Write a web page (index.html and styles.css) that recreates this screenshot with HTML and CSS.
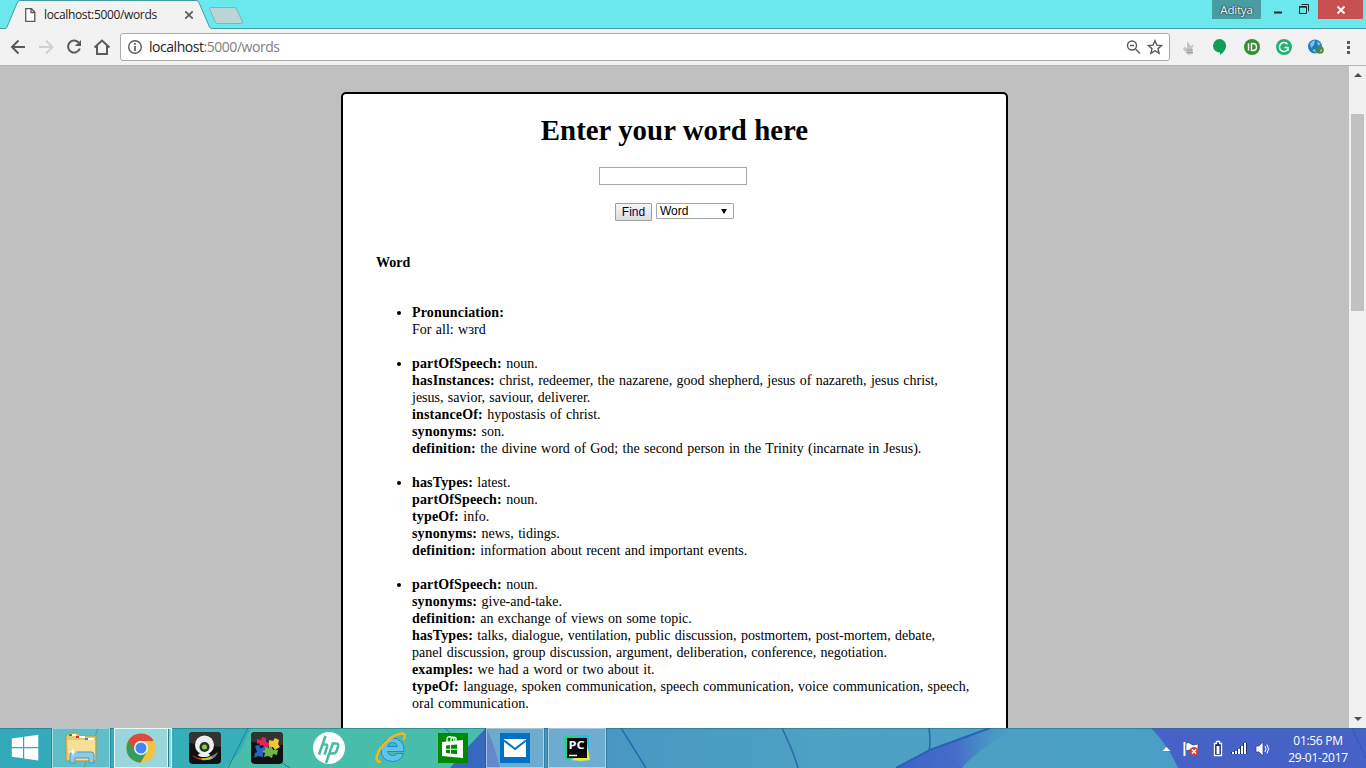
FILE: index.html
```html
<!DOCTYPE html>
<html lang="en">
<head>
<meta charset="utf-8">
<title>localhost:5000/words</title>
<link rel="stylesheet" href="styles.css">
</head>
<body>
<div class="desktop">
<header class="titlebar">
  <svg class="tabs" width="250" height="29" viewBox="0 0 250 29">
    <path d="M0 28.5H5Q6.500 28.500 7 27L17.500 2Q18.200 .5 20 .5H196Q198 .5 198.700 2L209.500 27Q210.200 28.500 212 28.500H250V29H0Z" fill="#f2f2f2"/>
    <path d="M0 28.500H5Q6.500 28.500 7 27L17.500 2Q18.200 .5 20 .5H196Q198 .5 198.700 2L209.500 27Q210.200 28.500 212 28.500H250" fill="none" stroke="#459da1"/>
    <path d="M210.500 7.500H234Q236 7.500 236.700 9L242.500 22Q243 23.500 241.500 23.500H218Q216 23.500 215.300 22L209.500 9Q209 7.500 210.500 7.500Z" fill="#b9d5d6" stroke="#7cb4b7"/>
    <path d="M25.700 8.700H31.500L34.800 12V21.300H25.700ZM31 9V12.500H34.500" fill="#fff" stroke="#5a5a5a" stroke-width="1.300"/>
    <path d="M185.300 11.300L192.700 18.700M192.700 11.300L185.300 18.700" stroke="#5a5a5a" stroke-width="1.700"/>
  </svg>
  <span class="tab-title">localhost:5000/words</span>
  <span class="user">Aditya</span>
  <svg class="winbtns" width="62" height="19" viewBox="0 0 62 19"><path d="M0 12.500h8" stroke="#162c2e" stroke-width="2"/><path d="M25.500 6.500h7v7h-7zM25 7.200h8M27.500 4.500h7v7" fill="none" stroke="#162c2e"/></svg>
  <span class="close"><svg width="10" height="10" viewBox="0 0 10 10"><path d="M1.500 1.500l7 7M8.500 1.500l-7 7" stroke="#fff" stroke-width="1.800"/></svg></span>
</header>
<div class="toolbar">
  <svg class="nav" width="112" height="37" viewBox="0 0 112 37">
    <g fill="none" stroke="#5a5a5a" stroke-width="2">
      <path d="M25 19H12.500M18.500 12.500L12 19L18.500 25.500"/>
      <path d="M39 19H52M46 12.500L52.500 19L46 25.500" stroke="#d0d0d0"/>
      <path d="M78.500 14.500A6 6 0 1 0 79.800 20.500"/><path d="M81 12V18H75Z" fill="#5a5a5a" stroke="none"/>
      <path d="M94.500 19.500L102 12.500L109.500 19.500M97 18V26H107V18"/>
    </g>
  </svg>
  <div class="omnibox">
    <svg width="16" height="16" viewBox="0 0 16 16"><circle cx="8" cy="8" r="6.300" fill="none" stroke="#5a5a5a" stroke-width="1.400"/><path d="M8 4v1.700M8 7v5" stroke="#5a5a5a" stroke-width="1.700"/></svg>
    <span class="url">localhost<i>:5000/words</i></span>
    <svg width="38" height="16" viewBox="0 0 38 16"><g fill="none" stroke="#5a5a5a" stroke-width="1.400"><circle cx="6" cy="6.500" r="4.500"/><path d="M4 6.500h4M9.500 10L14 14.500"/><path d="M29 1.700L30.900 6.100L35.600 6.500L32 9.600L33.100 14.200L29 11.700L24.900 14.200L26 9.600L22.400 6.500L27.100 6.100Z"/></g></svg>
  </div>
  <svg class="exts" width="196" height="37" viewBox="1170 28 196 37">
    <path d="M1184 47L1187 48L1187 41L1191 46L1194 44L1192 49L1193 54L1188 55L1183 49Z" fill="#c6c6c6"/><path d="M1187 50h6M1187 52.500h6" stroke="#999"/>
    <path d="M1219.500 39a6.600 6.600 0 0 1 6.600 6.600C1226 50 1223 53 1220 55V52.500A6.600 6.600 0 0 1 1219.500 39" fill="#109d58"/>
    <circle cx="1252" cy="47" r="8" fill="#358e35"/><path d="M1248.500 43.500v7M1251.500 43.500v7h1.500q3.500 0 3.500-3.500t-3.500-3.500z" fill="none" stroke="#fff" stroke-width="1.500"/>
    <circle cx="1284" cy="47" r="8" fill="#20b373"/><path d="M1287.500 44.200A4.500 4.500 0 1 0 1288 49V47.500H1284.500M1288 47v4" fill="none" stroke="#fff" stroke-width="1.500"/>
    <circle cx="1315" cy="46.500" r="7" fill="#2679b8"/><path d="M1310 44q3-5 5-3l-1 4-3 3zM1317 41l4 3-3 2zM1312 50l3-1 1 4z" fill="#79c2ec"/><circle cx="1320" cy="50" r="2.800" fill="none" stroke="#568c16" stroke-width="2"/>
    <path d="M1348.500 41v3M1348.500 46v3M1348.500 51v3" stroke="#5a5a5a" stroke-width="3"/>
  </svg>
</div>
<main class="view">
  <div class="page">
    <section class="card">
      <h1>Enter your word here</h1>
      <input class="field" type="text">
      <div class="controls"><span class="find">Find</span><span class="select">Word<b></b></span></div>
      <h2>Word</h2>
      <ul class="entries">
        <li><b>Pronunciation:</b><br>For all: wɜrd</li>
        <li><b>partOfSpeech:</b> noun.<br><b>hasInstances:</b> christ, redeemer, the nazarene, good shepherd, jesus of nazareth, jesus christ,<br>jesus, savior, saviour, deliverer.<br><b>instanceOf:</b> hypostasis of christ.<br><b>synonyms:</b> son.<br><b>definition:</b> the divine word of God; the second person in the Trinity (incarnate in Jesus).</li>
        <li><b>hasTypes:</b> latest.<br><b>partOfSpeech:</b> noun.<br><b>typeOf:</b> info.<br><b>synonyms:</b> news, tidings.<br><b>definition:</b> information about recent and important events.</li>
        <li><b>partOfSpeech:</b> noun.<br><b>synonyms:</b> give-and-take.<br><b>definition:</b> an exchange of views on some topic.<br><b>hasTypes:</b> talks, dialogue, ventilation, public discussion, postmortem, post-mortem, debate,<br>panel discussion, group discussion, argument, deliberation, conference, negotiation.<br><b>examples:</b> we had a word or two about it.<br><b>typeOf:</b> language, spoken communication, speech communication, voice communication, speech,<br>oral communication.</li>
      </ul>
    </section>
  </div>
  <div class="scrollbar"><i class="up"></i><i class="thumb"></i><i class="down"></i></div>
</main>
<footer class="taskbar">
  <svg class="wall" width="1366" height="40" viewBox="0 0 1366 40">
    <defs>
      <linearGradient id="w1"><stop offset="0" stop-color="#31a9ba"/><stop offset=".15" stop-color="#35b0b8"/><stop offset="1" stop-color="#35b8b8"/></linearGradient>
      <linearGradient id="w2"><stop offset="0" stop-color="#4291c2"/><stop offset=".4" stop-color="#4da1c3"/><stop offset="1" stop-color="#469dc5"/></linearGradient>
      <linearGradient id="w3"><stop offset="0" stop-color="#3c61c8"/><stop offset=".5" stop-color="#456fca"/><stop offset="1" stop-color="#4a9dc4" stop-opacity="0"/></linearGradient>
    </defs>
    <path d="M0 0H1366V40H0Z" fill="url(#w1)"/>
    <path d="M251 0H486L467 40H225L240 24Z" fill="#48bda9"/>
    <path d="M486 0H1366V40H455Z" fill="url(#w2)"/>
    <path d="M486 0L465 22L450 40H500Q493 12 486 0Z" fill="#3868bd"/>
    <path d="M990 0L930 23L896 40H962Q980 18 1020 0Z" fill="url(#w3)"/>
    <path d="M1151 0H1366V40H1178Q1168 17 1151 0Z" fill="#4662c6"/>
    <path d="M98 0L84 40M248 0L228 40M445 0L457 12M272 28L290 40" stroke="#237e8e" fill="none"/>
    <path d="M621 0L646 40M782 0Q794 25 798 40M929 0Q931 15 929 23" stroke="#2a67ae" stroke-width="1.500" fill="none"/>
    <path d="M896 40L930 22L990 0" stroke="#2962b4" stroke-width="2" fill="none"/><path d="M932 25Q947 25 959 40" stroke="#5260c5" fill="none"/>
    <path d="M1352 0L1366 30" stroke="#3656b6" fill="none"/>
    <path d="M0 .5H1366" stroke="#246a80" stroke-opacity=".55"/>
  </svg>
  <span class="start"><svg width="28" height="28" viewBox="0 0 28 28"><path d="M.8 4.500L12 2.900V13H.8ZM13.200 2.700L27.300.7V13H13.200ZM.8 14.200H12V24.300L.8 22.700ZM13.200 14.200H27.300V26.500L13.200 24.500Z" fill="#fff"/></svg></span>
  <span class="app framed"><svg width="34" height="32" viewBox="0 0 34 32"><path d="M2 27V4l3-3h9l2 3h16v25H4z" fill="#e5c970" stroke="#b9963c"/><path d="M3 8h28v20H5z" fill="#f4df96"/><path d="M5 2h7v2H5zM12 4h9v2h-9zM21 6h9v2h-9z" fill="#fff"/><path d="M5 2h3v2H5z" fill="#18a12c"/><path d="M12 4h3v2h-3z" fill="#d42e1c"/><path d="M21 6h3v2h-3z" fill="#2f8ae0"/><path d="M6 31V23q0-3 3-3h18q3 0 3 3v8h-5v-5H11v5z" fill="#90cae4" stroke="#4c96bf"/><path d="M9 15l.8 4.200 4.200.8-4.200.8L9 25l-.8-4.200L4 20l4.200-.8z" fill="#fff"/></svg></span>
  <span class="app active"><svg width="30" height="30" viewBox="0 0 30 30"><circle cx="15" cy="15" r="14.700" fill="#eec443"/><path d="M15 15L2.300 7.700A14.700 14.700 0 0 0 14.500 29.700L21 18.500Z" fill="#359c5c"/><path d="M2.300 7.700A14.700 14.700 0 0 1 27.800 7.900H15A7 7 0 0 0 8.800 18.500Z" fill="#d94a3f"/><circle cx="15" cy="15" r="7" fill="#f5f5f5"/><circle cx="15" cy="15" r="5.500" fill="#4285f4"/></svg></span>
  <span class="app"><svg width="32" height="32" viewBox="0 0 32 32"><rect width="32" height="32" rx="4" fill="#111"/><path d="M4 0H28Q32 0 32 4V15L0 11V4Q0 0 4 0" fill="#333"/><path d="M3 23Q14 31 29 20Q25 29 16 28Q7 28 3 23" fill="#ea4b28"/><path d="M10 26Q20 30 29 20Q26 28 18 28" fill="#2c8ee8"/><path d="M13 27Q19 28 23 25" stroke="#a4d638" stroke-width="2" fill="none"/><ellipse cx="15" cy="23" rx="6" ry="2" fill="#eee"/><circle cx="15.500" cy="13" r="9.500" fill="#eee"/><circle cx="15.500" cy="15" r="5" fill="#263323"/><circle cx="15.500" cy="15" r="2.500" fill="#87cb4a"/></svg></span>
  <span class="app"><svg width="32" height="32" viewBox="0 0 32 32"><rect width="32" height="32" rx="4" fill="#111"/><path d="M4 0H28Q32 0 32 4V13L0 10V4Q0 0 4 0" fill="#333"/><path d="M6 7l4 1 1-3 4 1v4l4 1-2 5h-4l-1-3-3 1-1-3-2 1z" fill="#e3245d"/><path d="M18 8l4 1 2-3 4 2-1 4 2 3-5 3-2-3-4 1z" fill="#edc832"/><path d="M4 14l4-1 1 3 5-1 1 5-3 1v4l-5-1-4 2 1-5 2-1z" fill="#2865c7"/><path d="M14 15l4 1 2-2 2 4h5l-1 5-4-1-1 4-4-2-4 1 1-4-3-2 3-1z" fill="#6ab747"/></svg></span>
  <span class="app"><svg width="32" height="32" viewBox="0 0 32 32"><circle cx="16" cy="16" r="16" fill="#fff"/><path d="M6 22.500L12.500 4M9.500 12.500H12.500Q15 12.500 14 15L11.500 22.500M13 31L19.800 11.500H23Q26 11.500 25 14.500L23.500 19Q22.500 21.500 20 21.500H16.500" fill="none" stroke="#47b9a7" stroke-width="2.500"/></svg></span>
  <span class="app"><svg width="34" height="32" viewBox="0 0 34 32"><path d="M7 17A11.500 11 0 1 1 30 17V19.500H13.500Q14.500 23.500 18.500 23.500Q21.500 23.500 23 21.500H29.500Q27 29.500 18.500 29.500Q7 29 7 17ZM13.500 14.500H23.500Q23 10.500 18.500 10.500Q14.500 10.500 13.500 14.500Z" fill="#5fc3ec" fill-rule="evenodd" stroke="#2588c7"/><path d="M7 30Q-1 30 5.500 18Q14 5 25 2Q33.500 0 29.500 8" fill="none" stroke="#efb623" stroke-width="2.600"/></svg></span>
  <span class="app"><svg width="30" height="30" viewBox="0 0 30 30"><path d="M0 0H30V30H0Z" fill="#008a00"/><path d="M4 9L25 7V25L4 23Z" fill="#fff"/><path d="M9 9V6Q9 3 13 4Q16 4 16 8M13 8V6Q15 3 18 5V8" fill="none" stroke="#fff" stroke-width="1.300"/><path d="M8 12.500l4-.4v3.700H8zM13 12l6-.6v4.400h-6zM8 16.800h4v3.700l-4-.4zM13 16.800h6v4.400l-6-.6z" fill="#008a00"/></svg></span>
  <span class="app framed"><svg width="30" height="30" viewBox="0 0 30 30"><path d="M0 0H30V30H0Z" fill="#0072c6"/><path d="M4 6H26V24H4Z" fill="#fff"/><path d="M4 7.500L15 16L26 7.500" fill="none" stroke="#0072c6" stroke-width="2"/></svg></span>
  <span class="app framed"><svg width="28" height="28" viewBox="0 0 28 28"><path d="M1 2L15 1L8 26L2 26Z" fill="#28d28c"/><path d="M15 1H26V14L22 23L15 12Z" fill="#22bfdf"/><path d="M24 10L27 26L18 27L8 26L20 20Z" fill="#e9ec45"/><path d="M4 4H24V24H4Z" fill="#080808"/><path d="M6 21.500h8" stroke="#fff" stroke-width="1.500"/><text x="5.500" y="15" textLength="16" lengthAdjust="spacingAndGlyphs" class="pc">PC</text></svg></span>
  <svg class="tray" width="112" height="40" viewBox="1160 728 112 40">
    <path d="M1162.500 751L1166.500 747L1170.500 751Z" fill="#fff"/>
    <path d="M1184.500 742v14" stroke="#fff" stroke-width="2"/><path d="M1186 743q3-1 5 1t7 0v7q-4 2-6 0t-6 0z" fill="#fff" stroke="#26386b" stroke-width=".6"/><circle cx="1194" cy="751.500" r="4.500" fill="#dc3e34"/><path d="M1192 749.500l4 4M1196 749.500l-4 4" stroke="#fff" stroke-width="1.400"/>
    <path d="M1214.500 743.500h2v-2h3v2h2v12h-7z" fill="#172653" stroke="#fff" stroke-width="1.300"/><path d="M1216.500 746h3v8h-3z" fill="#fff"/>
    <path d="M1233 754v-2M1236 754v-3M1239 754v-5M1242 754v-8M1245 754v-11" stroke="#1c2d65" stroke-width="4"/><path d="M1233 754v-2M1236 754v-3M1239 754v-5M1242 754v-8M1245 754v-11" stroke="#fff" stroke-width="2"/>
    <path d="M1256 746h3l4-4v14l-4-4h-3z" fill="#fff" stroke="#293e78" stroke-width=".7"/><path d="M1265 746q2 3 0 6M1267 744.500q3 4.500 0 9" fill="none" stroke="#fff"/>
  </svg>
  <div class="clock">01:56 PM<br>29-01-2017</div>
</footer>
</div>
</body>
</html>
```
FILE: styles.css
```css
* { box-sizing: border-box; }
body { margin: 0; overflow: hidden; }
svg { display: block; flex: none; }
.desktop { width: 1366px; height: 768px; display: flex; flex-direction: column; font-family: "Open Sans", sans-serif; }

.titlebar { height: 29px; flex: none; display: flex; align-items: flex-start; position: relative; background: linear-gradient(#6ae8ed 28px, #459da1 28px); }
.tab-title { position: absolute; left: 44px; top: 7px; font-size: 12px; line-height: 16px; color: #222; white-space: nowrap; letter-spacing: -.35px; }
.user { margin-left: auto; width: 49px; height: 19px; background: #479da1; color: #fff; font-size: 11.500px; line-height: 19px; text-align: center; text-shadow: 0 0 2px #123, 0 0 1px #123; letter-spacing: -.2px; }
.winbtns { margin-left: 13px; margin-right: -18px; }
.close { width: 45px; height: 19px; margin-right: 3px; background: #c75050; display: flex; align-items: center; justify-content: center; }

.toolbar { height: 37px; flex: none; display: flex; background: #f2f2f2; border-bottom: 1px solid #b3b3b3; }
.nav, .exts { margin-top: -1px; }
.omnibox { margin: 4px 0 0 8px; width: 1050px; height: 28px; border: 1px solid #aaa; border-radius: 3px; background: #fff; display: flex; align-items: center; padding: 0 5px 0 6px; }
.url { margin-left: 6px; flex: 1; font-size: 14px; line-height: 20px; color: #222; letter-spacing: -.46px; }
.url i { font-style: normal; color: #808080; }

.view { flex: 1; min-height: 0; display: flex; overflow: hidden; background: silver; }
.page { flex: 1; display: flex; justify-content: center; align-items: flex-start; padding-top: 26px; }
.card { width: 667px; height: 700px; border: 2px solid #000; border-radius: 5px; background: #fff; display: flex; flex-direction: column; align-items: center; font: 14px/17px "Liberation Serif", "DejaVu Serif", serif; color: #000; }
h1 { margin: 19px 0 0; font-size: 28.800px; line-height: 34px; letter-spacing: .05px; white-space: nowrap; }
.field { margin: 20px 3px 0 0; width: 148px; height: 18px; border: 1px solid #a9a9a9; background: #fff; padding: 0; }
.controls { margin-top: 18px; display: flex; align-items: flex-start; gap: 4px; font: 12px/15px "Liberation Sans", Arial, sans-serif; }
.find { width: 37px; height: 18px; border: 1px solid #a0a0a0; border-radius: 1px; background: linear-gradient(#f6f6f6, #ddd); color: #000050; line-height: 17px; text-align: center; }
.select { width: 78px; height: 16px; border: 1px solid #a6a6a6; border-radius: 1px; padding: 0 6px 0 3px; display: flex; justify-content: space-between; align-items: center; line-height: 14px; }
.select b { border: solid transparent; border-width: 5px 3px 0; border-top-color: #000; }
h2 { align-self: flex-start; margin: 33px 0 0 33px; font-size: 14px; line-height: 17px; }
.entries { align-self: flex-start; margin: 33px 0 0; padding: 0 0 0 69px; white-space: nowrap; word-spacing: .85px; }
.entries b { letter-spacing: .15px; }
.entries li { margin-bottom: 17px; }

.scrollbar { width: 17px; background: #f1f1f1; display: flex; flex-direction: column; align-items: center; padding: 7px 0; }
.up { border: 4px solid transparent; border-top: 0; border-bottom-color: #505050; }
.thumb { width: 13px; height: 197px; margin-top: 37px; background: #c1c1c1; }
.down { margin-top: auto; border: 4px solid transparent; border-bottom: 0; border-top-color: #505050; }

.taskbar { height: 40px; flex: none; position: relative; display: flex; gap: 4px; overflow: hidden; }
.wall { position: absolute; left: 0; top: 0; }
.start, .app, .tray, .clock { position: relative; }
.start { width: 48px; padding-left: 2px; display: flex; align-items: center; justify-content: center; }
.app { width: 58px; display: flex; align-items: center; justify-content: center; }
.framed { background: rgba(255,255,255,.22); border: 1px solid rgba(255,255,255,.45); box-shadow: 0 0 0 1px rgba(20,80,110,.35); }
.active { background: linear-gradient(90deg, rgba(255,255,255,.5) 52px, #e8fbfb 52px, #e8fbfb 53px, #257c8d 53px, #257c8d 54px, rgba(255,255,255,.45) 54px); border: 1px solid #e8fbfb; padding-right: 4px; }
.pc { font: bold 11px "Open Sans", sans-serif; fill: #fff; }
.tray { margin-left: auto; margin-right: -1px; }
.clock { width: 86px; margin-right: 5px; padding-top: 4px; color: #fff; font-size: 12px; line-height: 17px; text-align: center; letter-spacing: -.3px; }
```
